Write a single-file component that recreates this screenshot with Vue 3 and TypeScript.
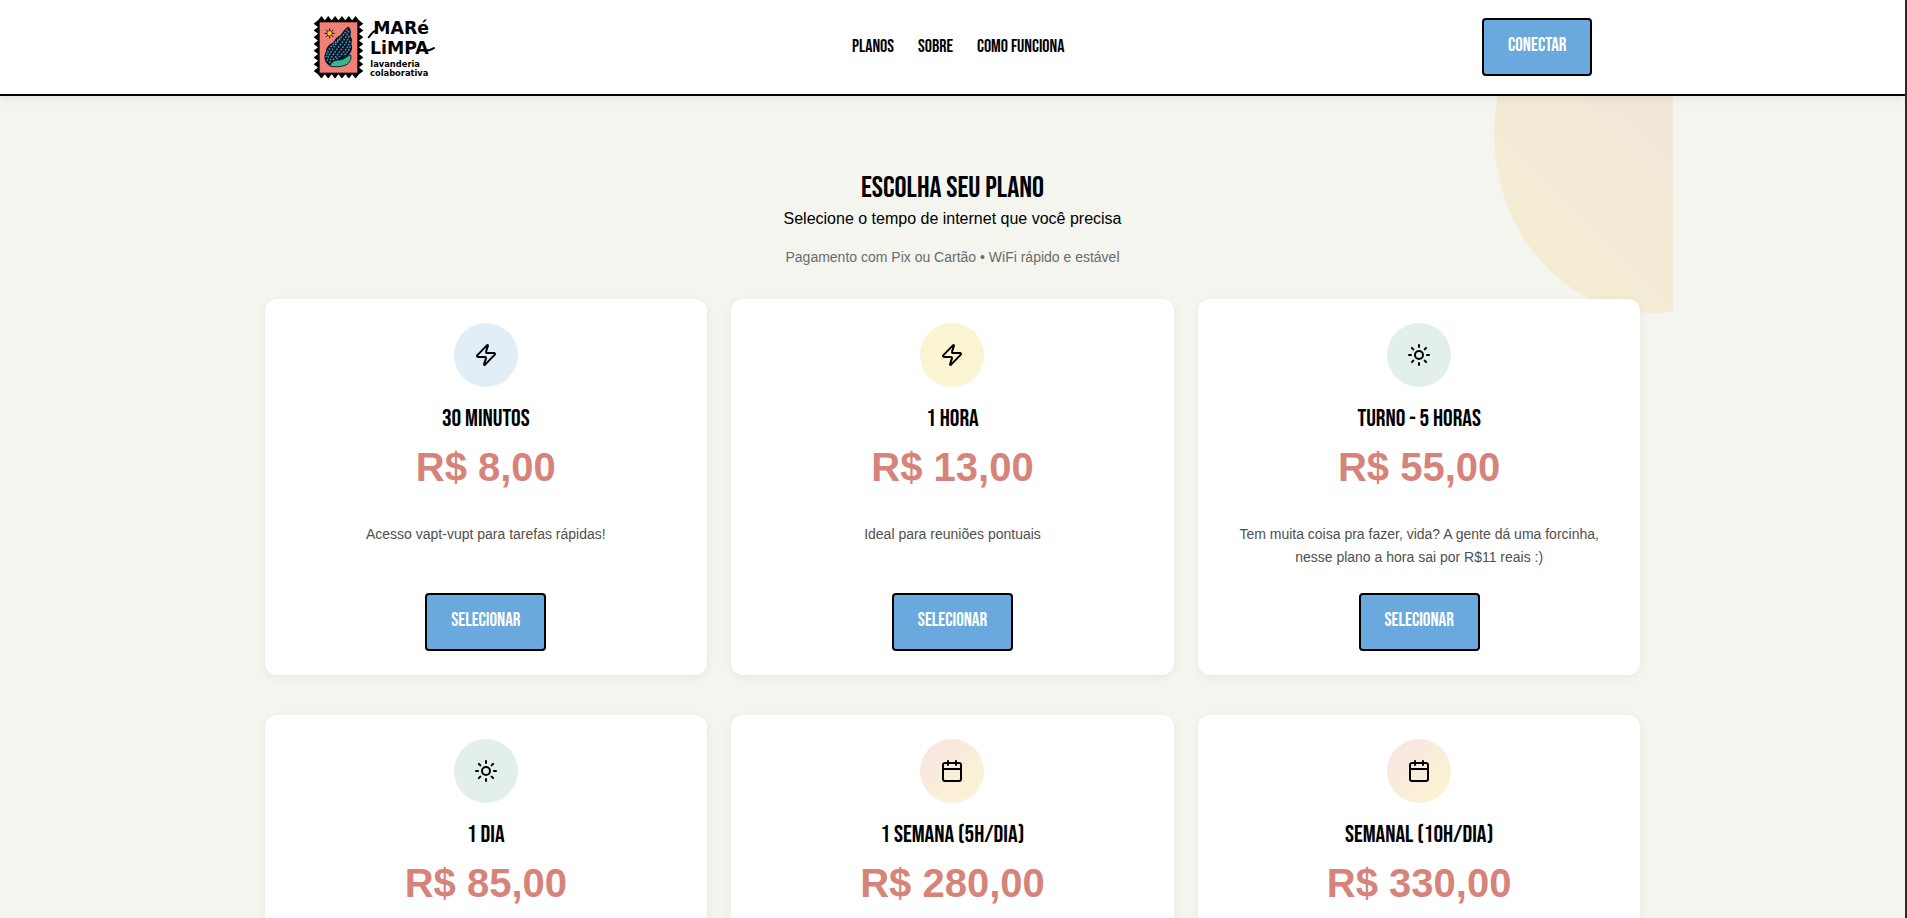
<script setup lang="ts">
interface Plan {
  name: string
  price: string
  description: string
  icon: 'zap' | 'sun' | 'calendar'
  tone: 'blue' | 'yellow' | 'green' | 'sunset'
}

const links = [
  { label: 'Planos', href: '#planos' },
  { label: 'Sobre', href: '#sobre' },
  { label: 'Como funciona', href: '#como-funciona' },
]

const plans: Plan[] = [
  { name: '30 minutos', price: 'R$ 8,00', description: 'Acesso vapt-vupt para tarefas rápidas!', icon: 'zap', tone: 'blue' },
  { name: '1 hora', price: 'R$ 13,00', description: 'Ideal para reuniões pontuais', icon: 'zap', tone: 'yellow' },
  { name: 'Turno - 5 horas', price: 'R$ 55,00', description: 'Tem muita coisa pra fazer, vida? A gente dá uma forcinha, nesse plano a hora sai por R$11 reais :)', icon: 'sun', tone: 'green' },
  { name: '1 dia', price: 'R$ 85,00', description: '', icon: 'sun', tone: 'green' },
  { name: '1 semana (5h/dia)', price: 'R$ 280,00', description: '', icon: 'calendar', tone: 'sunset' },
  { name: 'Semanal (10h/dia)', price: 'R$ 330,00', description: '', icon: 'calendar', tone: 'sunset' },
]

// Perforated outline of the stamp: pointed teeth on all four sides.
function stampOutline(): string {
  const left = 52, right = 175, top = 46, bottom = 208, depth = 13
  const cols = 6, rows = 8
  const dx = (right - left) / cols
  const dy = (bottom - top) / rows
  let d = `M${left} ${top}`
  for (let i = 0; i < cols; i++) d += `L${left + dx * (i + 0.5)} ${top - depth}L${left + dx * (i + 1)} ${top}`
  for (let i = 0; i < rows; i++) d += `L${right + depth} ${top + dy * (i + 0.5)}L${right} ${top + dy * (i + 1)}`
  for (let i = 0; i < cols; i++) d += `L${right - dx * (i + 0.5)} ${bottom + depth}L${right - dx * (i + 1)} ${bottom}`
  for (let i = 0; i < rows; i++) d += `L${left - depth} ${bottom - dy * (i + 0.5)}L${left} ${bottom - dy * (i + 1)}`
  return d + 'Z'
}
const stamp = stampOutline()
</script>

<template>
  <div class="page">
    <header class="header">
      <div class="header-inner">
        <a class="brand" href="#" aria-label="Maré Limpa lavanderia colaborativa">
          <svg class="logo" viewBox="37 33 366 186">
            <path :d="stamp" fill="#000" />
            <rect x="57" y="52" width="113" height="151" fill="#f08078" />
            <g stroke="#1c1a10" stroke-width="3" stroke-linecap="round">
              <path d="M87 71V99M73 85H101M77 75L97 95M97 75L77 95" />
              <circle cx="87" cy="85" r="8" fill="#fdc51c" stroke-width="2" />
            </g>
            <path d="M144 65C150 70 153 82 149 92C156 103 154 111 152 118C157 129 153 139 147 147L137 158C123 177 100 189 86 182C70 174 68 151 76 139C77 126 86 118 98 112C104 101 111 94 119 91C127 79 134 68 144 65Z" fill="#0c1420" />
            <g fill="none" stroke="#3e9ed0" stroke-width="4.5" stroke-dasharray="5 4">
              <path d="M140 73C130 91 110 108 100 126S80 153 80 170" />
              <path d="M144 78C137 99 120 116 108 134S89 158 87 176" />
              <path d="M145 93C140 112 129 123 117 140S99 162 95 168" />
              <path d="M148 108C143 127 134 136 122 149S108 158 105 163" />
              <path d="M149 124C147 134 140 142 130 152" />
              <path d="M119 97C109 110 92 121 86 132S76 148 76 156" />
            </g>
            <path d="M87 183C96 163 109 166 122 164C133 162 140 152 150 150C154 160 147 174 135 180C121 186 102 187 87 183Z" fill="#35b594" stroke="#10241e" stroke-width="3" />
            <g class="logo-text">
              <text x="218" y="88" class="logo-big">MARé</text>
              <text x="208" y="147" class="logo-big">LiMPA</text>
              <text x="209" y="185" class="logo-small">lavanderia</text>
              <text x="208" y="214" class="logo-small">colaborativa</text>
            </g>
            <path d="M226 78C216 77 211 90 204 97" fill="none" stroke="#000" stroke-width="6" stroke-linecap="round" />
            <path d="M372 137C382 137 393 134 400 129" fill="none" stroke="#000" stroke-width="6" stroke-linecap="round" />
          </svg>
        </a>
        <nav class="nav">
          <a v-for="link in links" :key="link.href" class="nav-link" :href="link.href">{{ link.label }}</a>
        </nav>
        <button class="button" type="button">Conectar</button>
      </div>
    </header>

    <main id="planos" class="plans">
      <div class="blob" aria-hidden="true"></div>
      <div class="intro">
        <h1 class="title">Escolha seu plano</h1>
        <p class="subtitle">Selecione o tempo de internet que você precisa</p>
        <p class="note">Pagamento com Pix ou Cartão • WiFi rápido e estável</p>
      </div>
      <div class="grid">
        <article v-for="plan in plans" :key="plan.name" class="card">
          <div class="badge" :class="plan.tone">
            <svg class="icon" viewBox="0 0 24 24" aria-hidden="true">
              <path v-if="plan.icon === 'zap'" d="M4 14a1 1 0 0 1-.78-1.63l9.9-10.2a.5.5 0 0 1 .86.46l-1.92 6.02A1 1 0 0 0 13 10h7a1 1 0 0 1 .78 1.63l-9.9 10.2a.5.5 0 0 1-.86-.46l1.92-6.02A1 1 0 0 0 11 14z" />
              <template v-else-if="plan.icon === 'sun'">
                <circle cx="12" cy="12" r="4" />
                <path d="M12 2v2M12 20v2M4.93 4.93l1.41 1.41M17.66 17.66l1.41 1.41M2 12h2M20 12h2M6.34 17.66l-1.41 1.41M19.07 4.93l-1.41 1.41" />
              </template>
              <template v-else>
                <path d="M8 2v4M16 2v4M3 10h18" />
                <rect x="3" y="4" width="18" height="18" rx="2" />
              </template>
            </svg>
          </div>
          <h2 class="plan-name">{{ plan.name }}</h2>
          <p class="price">{{ plan.price }}</p>
          <p class="description">{{ plan.description }}</p>
          <button class="button" type="button">Selecionar</button>
        </article>
      </div>
    </main>
  </div>
</template>

<style>
body {
  background: #f4f5ef;
}
</style>

<style scoped>
.page {
  --display: "Bebas Neue", "Liberation Sans Narrow", "Liberation Sans", sans-serif;
  min-height: 100vh;
  box-sizing: border-box;
  border-right: 2px solid #2d2d2d;
  color: #000;
  font-family: "Liberation Sans", Arial, sans-serif;
  font-size: 16px;
}

.header {
  position: relative;
  z-index: 2;
  background: #fff;
  border-bottom: 2px solid #000;
  box-shadow: 0 2px 10px rgba(0, 0, 0, 0.08);
}

.header-inner {
  display: flex;
  align-items: center;
  justify-content: space-between;
  max-width: 1280px;
  margin: 0 auto;
  padding: 16px 0;
}

.brand,
.logo {
  display: block;
}

.logo {
  width: 122px;
  height: 62px;
}

.logo-text {
  font-family: "DejaVu Sans", sans-serif;
  font-weight: 700;
}

.logo-big {
  font-size: 52px;
}

.logo-small {
  font-size: 25px;
}

.nav {
  display: flex;
  gap: 24px;
}

.nav-link {
  color: #000;
  font-family: var(--display);
  font-size: 18px;
  font-weight: 400;
  line-height: 24px;
  text-decoration: none;
  text-transform: uppercase;
}

.button {
  box-sizing: border-box;
  height: 58px;
  margin: 0;
  padding: 0 24px 3px;
  border: 2px solid #000;
  border-radius: 4px;
  background: #69a9dd;
  color: #fff;
  font-family: var(--display);
  font-size: 19px;
  font-weight: 400;
  text-transform: uppercase;
  cursor: pointer;
}

.plans {
  position: relative;
  box-sizing: border-box;
  max-width: 1440px;
  margin: 0 auto;
  padding: 74px 32px 64px;
  overflow: hidden;
}

.blob {
  position: absolute;
  top: -143px;
  right: -136px;
  width: 315px;
  height: 360px;
  border-radius: 50%;
  background: linear-gradient(45deg, #f4edd3 14%, #f1e6db 65%);
}

.intro {
  position: relative;
  margin-bottom: 31px;
  text-align: center;
}

.title,
.subtitle,
.note {
  margin: 0;
}

.title {
  font-family: var(--display);
  font-size: 30px;
  font-weight: 400;
  line-height: 37px;
  text-transform: uppercase;
}

.subtitle {
  margin-bottom: 16px;
  line-height: 24px;
}

.note {
  color: #6b6b6b;
  font-size: 14px;
  line-height: 21px;
}

.grid {
  position: relative;
  display: grid;
  grid-template-columns: repeat(3, minmax(0, 1fr));
  gap: 40px 24px;
}

.card {
  display: flex;
  flex-direction: column;
  align-items: center;
  padding: 24px;
  border-radius: 12px;
  background: #fff;
  box-shadow: 0 2px 10px rgba(0, 0, 0, 0.06);
  text-align: center;
}

.badge {
  display: flex;
  align-items: center;
  justify-content: center;
  width: 64px;
  height: 64px;
  border-radius: 50%;
}

.blue {
  background: #e1edf7;
}

.yellow {
  background: #fbf4d2;
}

.green {
  background: #e2efea;
}

.sunset {
  background: linear-gradient(135deg, #f8e7e1 15%, #fbf3d3 85%);
}

.icon {
  width: 24px;
  height: 24px;
  fill: none;
  stroke: #000;
  stroke-width: 2;
  stroke-linecap: round;
  stroke-linejoin: round;
}

.plan-name {
  margin: 16px 0 6px;
  font-family: var(--display);
  font-size: 24px;
  font-weight: 400;
  line-height: 32px;
  text-transform: uppercase;
}

.price {
  margin: 0 0 24px;
  color: #d6847a;
  font-size: 40px;
  font-weight: 700;
  line-height: 52px;
}

.description {
  flex: 1;
  min-height: 46px;
  margin: 6px 0 24px;
  color: #4f4f4f;
  font-size: 14px;
  line-height: 23px;
}
</style>
